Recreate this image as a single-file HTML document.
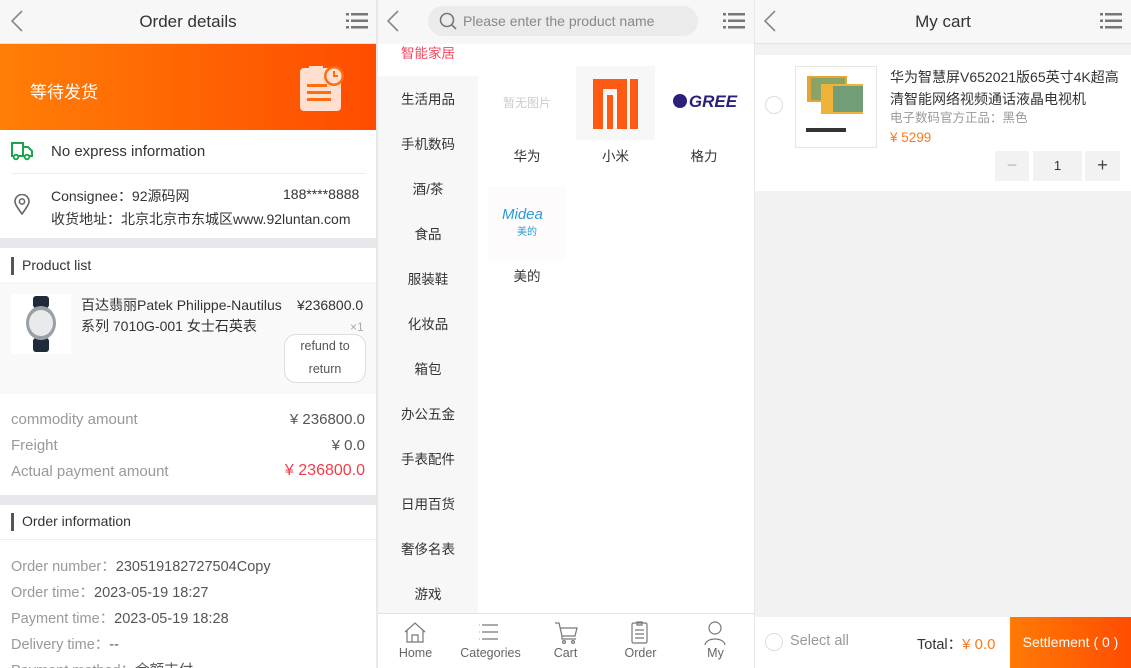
<!DOCTYPE html>
<html><head><meta charset="utf-8"><style>
*{margin:0;padding:0;box-sizing:border-box}
body{width:1131px;height:668px;overflow:hidden;background:#fff;font-family:"Liberation Sans","Noto Sans CJK SC",sans-serif;position:relative;color:#333}
.p{position:absolute;top:0;height:668px;width:376px;overflow:hidden;background:#fff}
.a{position:absolute}
.hdr{position:absolute;left:0;top:0;width:100%;height:44px;background:#f7f7f7;border-bottom:1px solid #e5e5e5}
.hdr .t{position:absolute;width:100%;text-align:center;top:12px;font-size:17px;color:#333}
.gray{color:#999}
</style></head><body>
<div class="a" style="left:376px;top:0;width:2px;height:668px;background:#e8e8e8"></div>
<div class="a" style="left:753px;top:0;width:2px;height:668px;background:#e8e8e8"></div>

<!-- LEFT -->
<div class="p" style="left:0">
 <div class="hdr"><div class="t">Order details</div>
  <svg class="a" style="left:9px;top:10px" width="16" height="22"><path d="M13 1 L3 11 L13 21" stroke="#888" stroke-width="1.6" fill="none"/></svg>
  <svg class="a" style="left:346px;top:12px" width="23" height="18"><g fill="#777"><rect x="0" y="1" width="3" height="2.5"/><rect x="5" y="1" width="17" height="2.5"/><rect x="0" y="7.5" width="3" height="2.5"/><rect x="5" y="7.5" width="17" height="2.5"/><rect x="0" y="14" width="3" height="2.5"/><rect x="5" y="14" width="17" height="2.5"/></g></svg>
 </div>
 <div class="a" style="left:0;top:44px;width:377px;height:86px;background:linear-gradient(90deg,#ff7e06,#ff4c00)"></div>
 <div class="a" style="left:30px;top:78px;color:#fff;font-size:17px">等待发货</div>
 <svg class="a" style="left:299px;top:64px" width="45" height="48"><rect x="1" y="4" width="41" height="43" rx="4" fill="#ffe0d0"/><rect x="10" y="2" width="14" height="6" fill="#ffe0d0"/><circle cx="35" cy="12" r="10" fill="#ff6d10"/><circle cx="35" cy="12" r="7.5" fill="#ffe0d0"/><path d="M35 7 V12 H39" stroke="#ff6d10" stroke-width="2" fill="none"/><rect x="8" y="20" width="20" height="3" fill="#ff6d10"/><rect x="8" y="27" width="24" height="3" fill="#ff6d10"/><rect x="8" y="34" width="24" height="3" fill="#ff6d10"/></svg>
 <svg class="a" style="left:11px;top:141px" width="22" height="20"><path d="M1 2 H12 V15 H1 Z M12 6 H17 L21 10 V15 H12" stroke="#1aa34a" stroke-width="2" fill="none"/><circle cx="5" cy="16" r="2.3" fill="#fff" stroke="#1aa34a" stroke-width="1.8"/><circle cx="16" cy="16" r="2.3" fill="#fff" stroke="#1aa34a" stroke-width="1.8"/></svg>
 <div class="a" style="left:51px;top:143px;font-size:15px;color:#333">No express information</div>
 <div class="a" style="left:11px;top:173px;width:355px;height:1px;background:#eee"></div>
 <svg class="a" style="left:14px;top:194px" width="16" height="21"><path d="M8 20 C3 13 1 10 1 7.5 A7 7 0 0 1 15 7.5 C15 10 13 13 8 20Z" stroke="#666" stroke-width="1.6" fill="none"/><circle cx="8" cy="7.5" r="2.6" stroke="#666" stroke-width="1.5" fill="none"/></svg>
 <div class="a" style="left:51px;top:186px;font-size:14px;color:#333">Consignee：92源码网</div>
 <div class="a" style="left:283px;top:186px;font-size:14px;color:#333">188****8888</div>
 <div class="a" style="left:51px;top:209px;font-size:14px;color:#333">收货地址：北京北京市东城区www.92luntan.com</div>
 <div class="a" style="left:0;top:238px;width:377px;height:10px;background:#e7e7ec"></div>
 <div class="a" style="left:11px;top:257px;width:3px;height:18px;background:#555"></div>
 <div class="a" style="left:22px;top:257px;font-size:14px;color:#333">Product list</div>
 <div class="a" style="left:0;top:283px;width:377px;height:1px;background:#eee"></div>
 <div class="a" style="left:0;top:284px;width:377px;height:110px;background:#f9f9f9"></div>
 <svg class="a" style="left:11px;top:294px" width="60" height="60"><rect width="60" height="60" fill="#fff"/><rect x="22" y="2" width="16" height="12" rx="3" fill="#1f2a3a"/><rect x="22" y="44" width="16" height="14" rx="3" fill="#1f2a3a"/><ellipse cx="30" cy="29" rx="15" ry="17" fill="#9aa0a6"/><ellipse cx="30" cy="29" rx="12" ry="13" fill="#e8eaec"/></svg>
 <div class="a" style="left:81px;top:295px;width:290px;font-size:14px;line-height:21px;color:#333">百达翡丽Patek Philippe-Nautilus<br>系列 7010G-001 女士石英表</div>
 <div class="a" style="left:297px;top:295px;font-size:14px;line-height:21px;color:#333;background:#f9f9f9">¥236800.0</div>
 <div class="a" style="left:350px;top:320px;font-size:12px;color:#aaa">×1</div>
 <div class="a" style="left:284px;top:334px;width:82px;height:49px;border:1px solid #ddd;border-radius:12px;background:#fff;text-align:center;font-size:12.5px;line-height:23px;color:#555">refund to<br>return</div>
 <div class="a" style="left:11px;top:411px;font-size:15px" ><span class="gray">commodity amount</span></div>
 <div class="a" style="right:11px;top:411px;font-size:15px;color:#555">¥ 236800.0</div>
 <div class="a" style="left:11px;top:437px;font-size:15px"><span class="gray">Freight</span></div>
 <div class="a" style="right:11px;top:437px;font-size:15px;color:#555">¥ 0.0</div>
 <div class="a" style="left:11px;top:463px;font-size:15px"><span class="gray">Actual payment amount</span></div>
 <div class="a" style="right:11px;top:462px;font-size:16px;color:#f23c4b">¥ 236800.0</div>
 <div class="a" style="left:0;top:495px;width:377px;height:10px;background:#e7e7ec"></div>
 <div class="a" style="left:11px;top:513px;width:3px;height:18px;background:#555"></div>
 <div class="a" style="left:22px;top:513px;font-size:14px;color:#333">Order information</div>
 <div class="a" style="left:0;top:539px;width:377px;height:1px;background:#eee"></div>
 <div class="a" style="left:11px;top:554px;font-size:14.5px;line-height:26px;color:#555"><span class="gray">Order number：</span>230519182727504Copy<br><span class="gray">Order time：</span>2023-05-19 18:27<br><span class="gray">Payment time：</span>2023-05-19 18:28<br><span class="gray">Delivery time：</span>--<br><span class="gray">Payment method：</span>余额支付</div>
</div>

<!-- MIDDLE -->
<div class="p" style="left:378px">
 <div class="hdr" style="border-bottom:none">
  <svg class="a" style="left:7px;top:10px" width="16" height="22"><path d="M13 1 L3 11 L13 21" stroke="#888" stroke-width="1.6" fill="none"/></svg>
  <div class="a" style="left:50px;top:6px;width:270px;height:30px;border-radius:15px;background:#ebebeb"></div>
  <svg class="a" style="left:61px;top:12px" width="19" height="19"><circle cx="8" cy="8" r="6.5" stroke="#777" stroke-width="1.6" fill="none"/><path d="M13 13 L17 17" stroke="#777" stroke-width="1.6"/></svg>
  <div class="a" style="left:85px;top:13px;font-size:14px;color:#888">Please enter the product name</div>
  <svg class="a" style="left:345px;top:12px" width="23" height="18"><g fill="#777"><rect x="0" y="1" width="3" height="2.5"/><rect x="5" y="1" width="17" height="2.5"/><rect x="0" y="7.5" width="3" height="2.5"/><rect x="5" y="7.5" width="17" height="2.5"/><rect x="0" y="14" width="3" height="2.5"/><rect x="5" y="14" width="17" height="2.5"/></g></svg>
 </div>
 <div class="a" style="left:0;top:76px;width:100px;height:537px;background:#f7f7f7"></div>
 <div class="a" style="left:0;top:44px;width:100px;text-align:center;font-size:13.5px;line-height:45px;color:#333">
  <div style="color:#f5475d;line-height:20px;padding-bottom:12px">智能家居</div>
  <div style="margin-top:1px">生活用品</div><div>手机数码</div><div>酒/茶</div><div>食品</div><div>服装鞋</div><div>化妆品</div><div>箱包</div><div>办公五金</div><div>手表配件</div><div>日用百货</div><div>奢侈名表</div><div>游戏</div>
 </div>
 <div class="a" style="left:110px;top:66px;width:78px;height:74px;text-align:center;line-height:74px;font-size:12px;color:#ccc">暂无图片</div>
 <div class="a" style="left:198px;top:66px;width:79px;height:74px;background:#f7f7f7"></div>
 <svg class="a" style="left:215px;top:79px" width="46" height="50" fill="#ff5a14"><rect x="0" y="0" width="10" height="50"/><rect x="0" y="0" width="34" height="10"/><rect x="24" y="0" width="10" height="50"/><rect x="14" y="16" width="6" height="34"/><rect x="37" y="0" width="8" height="50"/></svg>
 <div class="a" style="left:288px;top:92px;width:78px;text-align:center;font:italic bold 17px 'Liberation Sans',sans-serif;color:#2a1f7a"><span style="display:inline-block;width:14px;height:14px;border-radius:50%;background:#2a1f7a;vertical-align:-1px;margin-right:2px"></span>GREE</div>
 <div class="a" style="left:110px;top:186px;width:78px;height:74px;background:#fdfbfc"></div>
 <div class="a" style="left:124px;top:206px;font-size:15px;color:#2b9ad6;font-style:italic">Midea</div>
 <div class="a" style="left:139px;top:223px;font-size:10px;color:#2b9ad6">美的</div>
 <div class="a" style="left:110px;top:145px;width:78px;text-align:center;font-size:13.5px">华为</div>
 <div class="a" style="left:198px;top:145px;width:79px;text-align:center;font-size:13.5px">小米</div>
 <div class="a" style="left:287px;top:145px;width:78px;text-align:center;font-size:13.5px">格力</div>
 <div class="a" style="left:110px;top:265px;width:78px;text-align:center;font-size:13.5px">美的</div>
 <div class="a" style="left:0;top:613px;width:376px;height:55px;background:#fff;border-top:1px solid #e3e3e3"></div>
 <div class="a" style="left:0;top:646px;width:376px;display:flex;font-size:12.5px;color:#666;text-align:center">
  <div style="width:75px">Home</div><div style="width:75px">Categories</div><div style="width:75px">Cart</div><div style="width:75px">Order</div><div style="width:75px">My</div></div>
 <svg class="a" style="left:0;top:620px" width="376" height="26" fill="none" stroke="#777" stroke-width="1.2">
  <path d="M27 12 L37 3 L47 12 M29 10 V22 H45 V10 M34 22 V15 H40 V22"/>
  <path d="M104 5 H120 M104 12 H120 M104 19 H120 M101 5 h0.5 M101 12 h0.5 M101 19 h0.5"/>
  <path d="M177 3 H181 L184 16 H197 L199 8 H182 M184 16 V19 H198"/><circle cx="186" cy="22" r="1.4"/><circle cx="195" cy="22" r="1.4"/>
  <rect x="254" y="3" width="15" height="20" rx="1.5"/><path d="M257 10 H266 M257 14 H266 M257 18 H266 M259 2 H264 V5 H259Z"/>
  <circle cx="337" cy="8" r="6"/><path d="M327 25 C328 17 346 17 347 25"/>
 </svg>
</div>

<!-- RIGHT -->
<div class="p" style="left:755px;background:#f2f2f2">
 <div class="hdr"><div class="t">My cart</div>
  <svg class="a" style="left:7px;top:10px" width="16" height="22"><path d="M13 1 L3 11 L13 21" stroke="#888" stroke-width="1.6" fill="none"/></svg>
  <svg class="a" style="left:345px;top:12px" width="23" height="18"><g fill="#777"><rect x="0" y="1" width="3" height="2.5"/><rect x="5" y="1" width="17" height="2.5"/><rect x="0" y="7.5" width="3" height="2.5"/><rect x="5" y="7.5" width="17" height="2.5"/><rect x="0" y="14" width="3" height="2.5"/><rect x="5" y="14" width="17" height="2.5"/></g></svg>
 </div>
 <div class="a" style="left:0;top:55px;width:376px;height:136px;background:#fff"></div>
 <div class="a" style="left:10px;top:96px;width:18px;height:18px;border-radius:50%;border:1px solid #ddd"></div>
 <div class="a" style="left:40px;top:66px;width:82px;height:82px;border:1px solid #e5e5e5;background:#fff"></div>
 <svg class="a" style="left:48px;top:74px" width="66" height="66"><rect x="4" y="2" width="40" height="26" fill="#e6a531"/><rect x="8" y="4" width="34" height="22" fill="#2aa3a0" opacity=".5"/><rect x="18" y="10" width="42" height="30" fill="#f0b33a"/><rect x="30" y="12" width="30" height="26" fill="#1d8fa0" opacity=".6"/><rect x="3" y="54" width="40" height="4" fill="#333"/></svg>
 <div class="a" style="left:135px;top:66px;width:232px;font-size:14px;line-height:22px;color:#333">华为智慧屏V652021版65英寸4K超高清智能网络视频通话液晶电视机</div>
 <div class="a" style="left:135px;top:107px;font-size:12.5px;color:#999">电子数码官方正品：黑色</div>
 <div class="a" style="left:135px;top:130px;font-size:13.5px;color:#ff7a1a">¥ 5299</div>
 <div class="a" style="left:240px;top:151px;width:34px;height:30px;background:#f2f2f2;text-align:center;line-height:28px;color:#bbb;font-size:18px">−</div>
 <div class="a" style="left:278px;top:151px;width:49px;height:30px;background:#f2f2f2;text-align:center;line-height:30px;font-size:13px">1</div>
 <div class="a" style="left:330px;top:151px;width:35px;height:30px;background:#f2f2f2;text-align:center;line-height:28px;font-size:18px;color:#444">+</div>
 <div class="a" style="left:0;top:617px;width:376px;height:51px;background:#fff"></div>
 <div class="a" style="left:10px;top:633px;width:18px;height:18px;border-radius:50%;border:1px solid #ddd"></div>
 <div class="a" style="left:35px;top:633px;font-size:14.5px;color:#999">Select all</div>
 <div class="a" style="left:162px;top:633px;font-size:14.5px;color:#333">Total：<span style="color:#ff7a1a;font-size:15px">¥ 0.0</span></div>
 <div class="a" style="left:255px;top:617px;width:121px;height:51px;background:linear-gradient(90deg,#ff7a06,#ff4d00);color:#fff;font-size:14px;text-align:center;line-height:50px">Settlement ( 0 )</div>
</div>
</body></html>
